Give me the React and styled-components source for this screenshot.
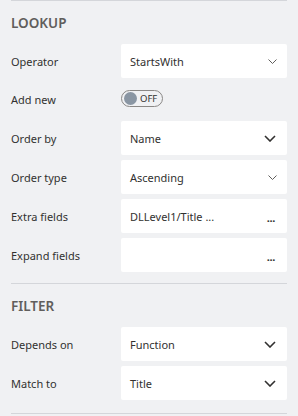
import styled, { createGlobalStyle } from 'styled-components';

const Global = createGlobalStyle`
  html, body {
    margin: 0;
    padding: 0;
    background: #f0f1f3;
  }
  body {
    font-family: "Noto Sans", "Open Sans", sans-serif;
    color: #323130;
  }
`;

const Panel = styled.div`
  width: 298px;
  height: 416px;
  padding: 0 11px;
  box-sizing: border-box;
  background: #f0f1f3;
  overflow: hidden;
`;

const Section = styled.section`
  border-top: 1px solid #d4d6da;
  padding: 12px 0 ${p => p.$bottom || 11}px;
`;

const Heading = styled.h2`
  margin: 0 0 11px;
  font-size: 13.5px;
  line-height: 20px;
  font-weight: 600;
  color: #605e5c;
`;

const Rows = styled.div`
  display: flex;
  flex-direction: column;
  gap: 5px;
`;

const Row = styled.div`
  display: grid;
  grid-template-columns: 110px 1fr;
  align-items: center;
  height: ${p => p.$h || 34}px;
`;

const Label = styled.label`
  font-size: 11px;
  color: #323130;
`;

const Field = styled.div`
  height: 34px;
  background: #fff;
  border-radius: 2px;
  display: flex;
  align-items: center;
  justify-content: space-between;
  padding: 0 10px 0 9px;
  box-sizing: border-box;
  font-size: 11px;
  color: #323130;
`;

const Value = styled.span`
  white-space: nowrap;
`;

const Toggle = styled.div`
  width: 42px;
  height: 17px;
  box-sizing: border-box;
  border: 1px solid #8a8886;
  border-radius: 9px;
  display: flex;
  align-items: center;
  gap: 3px;
  padding-left: 2px;
  margin-top: -3px;
  font-size: 9.5px;
  color: #323130;
`;

const Knob = styled.span`
  width: 13px;
  height: 13px;
  border-radius: 50%;
  background: #8a96a3;
`;

const Dots = styled.span`
  font-size: 11px;
  font-weight: 700;
  letter-spacing: -0.3px;
  margin-right: 2px;
  margin-top: 2px;
  color: #323130;
`;

const Chevron = ({ bold }) =>
  bold ? (
    <svg width="12" height="7" viewBox="0 0 12 7" style={{ marginRight: 1 }}>
      <path d="M1 1l5 5 5-5" fill="none" stroke="#323130" strokeWidth="1.6" />
    </svg>
  ) : (
    <svg width="9" height="5" viewBox="0 0 9 5">
      <path d="M0.5 0.5l4 4 4-4" fill="none" stroke="#605e5c" strokeWidth="1" />
    </svg>
  );

const SelectRow = ({ label, value, bold }) => (
  <Row>
    <Label>{label}</Label>
    <Field>
      <Value>{value}</Value>
      <Chevron bold={bold} />
    </Field>
  </Row>
);

const PickerRow = ({ label, value }) => (
  <Row>
    <Label>{label}</Label>
    <Field>
      <Value>{value}</Value>
      <Dots>...</Dots>
    </Field>
  </Row>
);

export default function App() {
  return (
    <Panel>
      <Global />
      <Section>
        <Heading>LOOKUP</Heading>
        <Rows>
          <SelectRow label="Operator" value="StartsWith" />
          <Row $h={33}>
            <Label>Add new</Label>
            <Toggle>
              <Knob />
              OFF
            </Toggle>
          </Row>
          <SelectRow label="Order by" value="Name" bold />
          <SelectRow label="Order type" value="Ascending" />
          <PickerRow label="Extra fields" value="DLLevel1/Title ..." />
          <PickerRow label="Expand fields" value="" />
        </Rows>
      </Section>
      <Section $bottom={13}>
        <Heading>FILTER</Heading>
        <Rows>
          <SelectRow label="Depends on" value="Function" bold />
          <SelectRow label="Match to" value="Title" bold />
        </Rows>
      </Section>
      <Section />
    </Panel>
  );
}
